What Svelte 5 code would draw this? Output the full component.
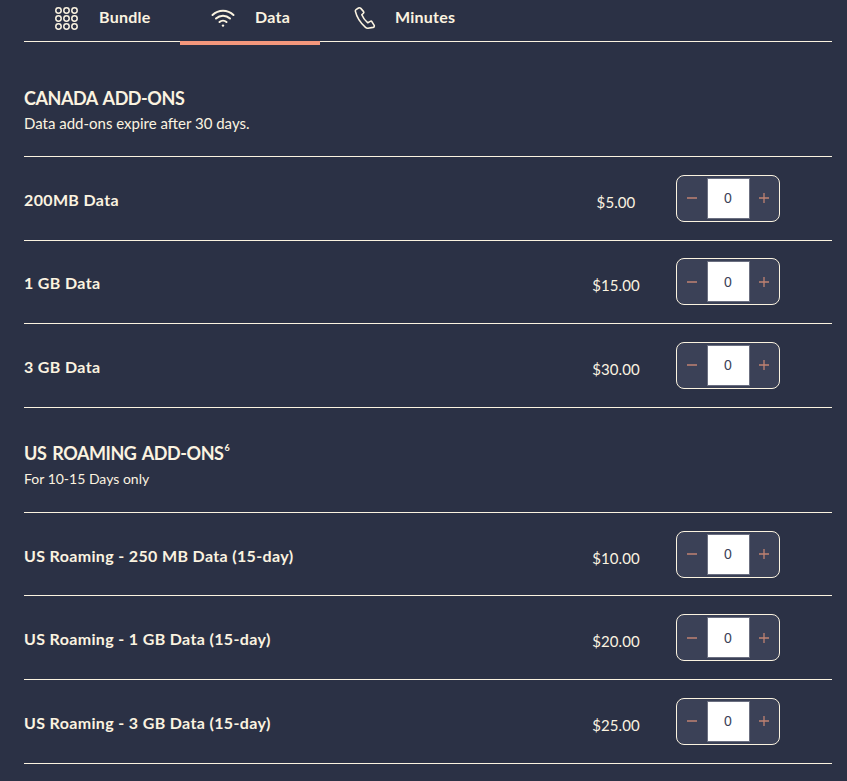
<script>
	const sections = [
		{
			title: "CANADA ADD-ONS",
			note: "Data add-ons expire after 30 days.",
			items: [
				{ name: "200MB Data", price: "$5.00" },
				{ name: "1 GB Data", price: "$15.00" },
				{ name: "3 GB Data", price: "$30.00" }
			]
		},
		{
			title: "US ROAMING ADD-ONS",
			sup: "6",
			note: "For 10-15 Days only",
			items: [
				{ name: "US Roaming - 250 MB Data (15-day)", price: "$10.00" },
				{ name: "US Roaming - 1 GB Data (15-day)", price: "$20.00" },
				{ name: "US Roaming - 3 GB Data (15-day)", price: "$25.00" }
			]
		}
	]
	const dots = [3.5, 11.5, 19.5]
</script>

<div class="page">
	<nav class="tabs">
		<div class="tab">
			<svg class="icon" width="23" height="23" viewBox="0 0 23 23" fill="none" stroke="currentColor" stroke-width="1.5">
				{#each dots as y}
					{#each dots as x}
						<circle cx={x} cy={y} r="2.7" />
					{/each}
				{/each}
			</svg>
			<span>Bundle</span>
		</div>
		<div class="tab active">
			<svg class="icon" width="24" height="24" viewBox="0 0 24 24" fill="none" stroke="currentColor" stroke-width="2" stroke-linecap="round">
				<path d="M1.5 9C7.5 3.2 16.5 3.2 22.5 9" />
				<path d="M5 12.5C9 8.8 15 8.8 19 12.5" />
				<path d="M8.5 16C10.5 14.2 13.5 14.2 15.5 16" />
				<circle cx="12" cy="19.6" r="1.2" fill="currentColor" stroke="none" />
			</svg>
			<span>Data</span>
		</div>
		<div class="tab">
			<svg class="icon" width="24" height="24" viewBox="0 0 24 24" fill="none" stroke="currentColor" stroke-width="1.6" stroke-linejoin="round">
				<path d="M5.5 2L3 3.6C2.4 4 2.2 4.6 2.4 5.4C3.6 10.5 7 16.5 12.5 21.4C13.2 22 14 22.4 15 22.2L20 21.4C21 21.2 21.6 20.4 21.2 19.4L19 15.8C18.6 15.2 18 15 17.3 15.4L14.8 16.8C12 14.5 9.8 11.4 8.8 8.8L10.4 7.2C10.9 6.8 11 6.2 10.6 5.6L7.8 2.4C7.2 1.8 6.2 1.6 5.5 2Z" />
			</svg>
			<span>Minutes</span>
		</div>
	</nav>

	{#each sections as section}
		<section class="section">
			<header class="head">
				<h2>{section.title}{#if section.sup}<sup>{section.sup}</sup>{/if}</h2>
				<p>{section.note}</p>
			</header>
			{#each section.items as item}
				<div class="row">
					<div class="name">{item.name}</div>
					<div class="price">{item.price}</div>
					<div class="stepper">
						<span class="btn">
							<svg width="10" height="10" viewBox="0 0 10 10" stroke="currentColor" stroke-width="1.3"><path d="M0 5H10" /></svg>
						</span>
						<span class="qty">0</span>
						<span class="btn">
							<svg width="10" height="10" viewBox="0 0 10 10" stroke="currentColor" stroke-width="1.3"><path d="M0 5H10M5 0V10" /></svg>
						</span>
					</div>
				</div>
			{/each}
		</section>
	{/each}
</div>

<style>
	:global(body) {
		background: #2b3145;
	}
	.page {
		height: 781px;
		overflow: hidden;
		padding: 0 15px 0 24px;
		box-sizing: border-box;
		font-family: Lato, "Noto Sans", sans-serif;
		color: #fbf3e0;
	}
	.tabs {
		display: flex;
		height: 42px;
		box-sizing: border-box;
		border-bottom: 1px solid #fbf3e0;
	}
	.tab {
		display: flex;
		align-items: center;
		gap: 20px;
		width: 140px;
		height: 36px;
		padding-left: 31px;
		box-sizing: border-box;
		font-size: 16px;
		font-weight: 700;
		letter-spacing: 0.25px;
		position: relative;
	}
	.tab span {
		margin-top: -3px;
	}
	.tab:first-child {
		width: 156px;
	}
	.tab:first-child .icon {
		margin-right: 1px;
	}
	.tab:nth-child(3) {
		padding-left: 33px;
		gap: 18px;
	}
	.active::after {
		content: "";
		position: absolute;
		left: 0;
		right: 0;
		top: 41px;
		height: 4px;
		background: #f4977c;
	}
	.head {
		padding: 44px 0 22px;
		border-bottom: 1px solid #fbf3e0;
	}
	.section + .section .head {
		padding-top: 33px;
	}
	h2 {
		margin: 0;
		font-size: 18px;
		line-height: 24px;
		font-weight: 700;
		letter-spacing: -0.45px;
		word-spacing: 2px;
	}
	sup {
		font-size: 9px;
		line-height: 0;
		vertical-align: 9px;
		margin-left: 1px;
	}
	p {
		margin: 3px 0 0;
		padding-bottom: 1px;
		font-size: 15px;
		line-height: 20px;
	}
	.section + .section p {
		margin-top: 4px;
		font-size: 14px;
	}
	.row {
		display: flex;
		align-items: center;
		height: 83.6px;
		box-sizing: border-box;
		border-bottom: 1px solid #fbf3e0;
	}
	.name {
		flex: 1;
		font-size: 16px;
		font-weight: 700;
		letter-spacing: 0.35px;
		margin-top: 2px;
	}
	.price {
		width: 80px;
		text-align: center;
		font-size: 15px;
		letter-spacing: 0.1px;
		margin-top: 7px;
	}
	.stepper {
		display: flex;
		width: 104px;
		height: 47px;
		margin: 0 52px 0 20px;
		box-sizing: border-box;
		border: 1px solid #fbf3e0;
		border-radius: 8px;
		background: #3b4157;
		padding: 2px 0;
		overflow: hidden;
	}
	.btn {
		flex: 1;
		display: flex;
		align-items: center;
		justify-content: center;
		color: #c08272;
	}
	.qty {
		width: 43px;
		background: #fff;
		border: 1px solid #6b6f80;
		box-sizing: border-box;
		display: flex;
		align-items: center;
		justify-content: center;
		font-family: "Liberation Sans", sans-serif;
		font-size: 14px;
		color: #3b4157;
	}
</style>
